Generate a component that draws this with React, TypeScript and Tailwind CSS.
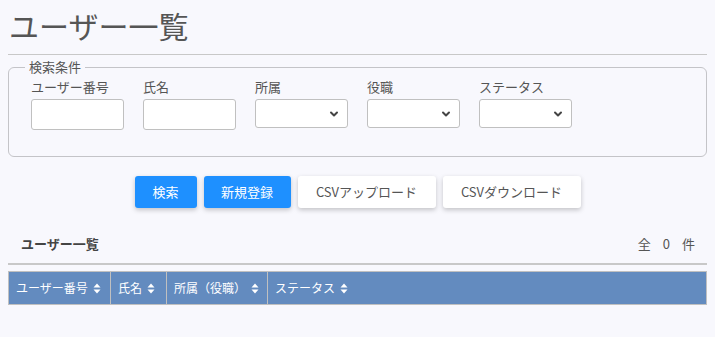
const FONT = "font-['Noto_Sans_CJK_JP','Noto_Sans',sans-serif]"

function Chevron() {
  return (
    <svg width="10" height="10" viewBox="0 0 10 10" className="absolute right-[8px] top-1/2 -translate-y-1/2">
      <path d="M2 3.5 L5 6.5 L8 3.5" fill="none" stroke="#444" strokeWidth="2" strokeLinecap="round" strokeLinejoin="round" />
    </svg>
  )
}

function SortIcon() {
  return (
    <svg width="8" height="11" viewBox="0 0 8 11" className="ml-[5px] inline-block">
      <path d="M4 0.5 L7.5 4.5 H0.5 Z" fill="#fff" />
      <path d="M4 10.5 L7.5 6.5 H0.5 Z" fill="#fff" />
    </svg>
  )
}

const fields: { label: string; kind: 'text' | 'select' }[] = [
  { label: 'ユーザー番号', kind: 'text' },
  { label: '氏名', kind: 'text' },
  { label: '所属', kind: 'select' },
  { label: '役職', kind: 'select' },
  { label: 'ステータス', kind: 'select' },
]

const columns = [
  { label: 'ユーザー番号', w: 'w-[102px]' },
  { label: '氏名', w: 'w-[56px]' },
  { label: '所属（役職）', w: 'w-[101px]' },
  { label: 'ステータス', w: 'flex-1' },
]

export default function App() {
  return (
    <div className={`${FONT} min-h-[337px] w-[715px] bg-[#f8f8fd] px-[8px] pt-[3px] text-[#555]`}>
      <h1 className="text-[30px] leading-[44px] text-[#555] pl-[1px]">ユーザー一覧</h1>
      <div className="mt-[7px] h-px bg-[#c8c8c8]" />

      <fieldset className="mt-[4px] h-[98px] rounded-[6px] border border-[#c4c4c8] px-[22px]">
        <legend className="px-[4px] -ml-[6px] text-[13px] leading-[16px] text-[#555]">検索条件</legend>
        <div className="flex gap-[19px] pt-[3px]">
          {fields.map((f) => (
            <div key={f.label} className="flex w-[93px] flex-col">
              <span className="text-[13px] leading-[18px] text-[#555]">{f.label}</span>
              {f.kind === 'text' ? (
                <div className="mt-[3px] h-[31px] rounded-[3px] border border-[#c0c0c0] bg-white" />
              ) : (
                <div className="relative mt-[3px] h-[29px] rounded-[3px] border border-[#c0c0c0] bg-white">
                  <Chevron />
                </div>
              )}
            </div>
          ))}
        </div>
      </fieldset>

      <div className="mt-[19px] flex justify-center gap-[7px]">
        <button className="h-[32px] w-[62px] rounded-[3px] bg-[#1e90ff] text-[13px] text-white shadow-[0_2px_5px_rgba(0,0,0,0.22)]">検索</button>
        <button className="h-[32px] w-[87px] rounded-[3px] bg-[#1e90ff] text-[13px] text-white shadow-[0_2px_5px_rgba(0,0,0,0.22)]">新規登録</button>
        <button className="h-[32px] w-[138px] rounded-[3px] bg-white text-[13px] text-[#555] shadow-[0_2px_5px_rgba(0,0,0,0.22)]">CSVアップロード</button>
        <button className="h-[32px] w-[138px] rounded-[3px] bg-white text-[13px] text-[#555] shadow-[0_2px_5px_rgba(0,0,0,0.22)]">CSVダウンロード</button>
      </div>

      <div className="mt-[27px] flex items-center justify-between pl-[13px] pr-[12px]">
        <span className="text-[13px] font-bold leading-[18px] text-[#444]">ユーザー一覧</span>
        <span className="flex gap-[12px] text-[13px] leading-[18px] text-[#555]">
          <span>全</span>
          <span>0</span>
          <span>件</span>
        </span>
      </div>
      <div className="mt-[10px] h-[2px] bg-[#c8c8c8]" />

      <div className="mt-[6px] flex h-[34px] border border-[#c0c0c0] bg-[#638bbf] text-[12px] text-white">
        {columns.map((c, i) => (
          <div
            key={c.label}
            className={`${c.w} flex items-center pl-[7px] ${i < columns.length - 1 ? 'border-r border-[#c0c0c0]' : ''}`}
          >
            {c.label}
            <SortIcon />
          </div>
        ))}
      </div>
    </div>
  )
}
